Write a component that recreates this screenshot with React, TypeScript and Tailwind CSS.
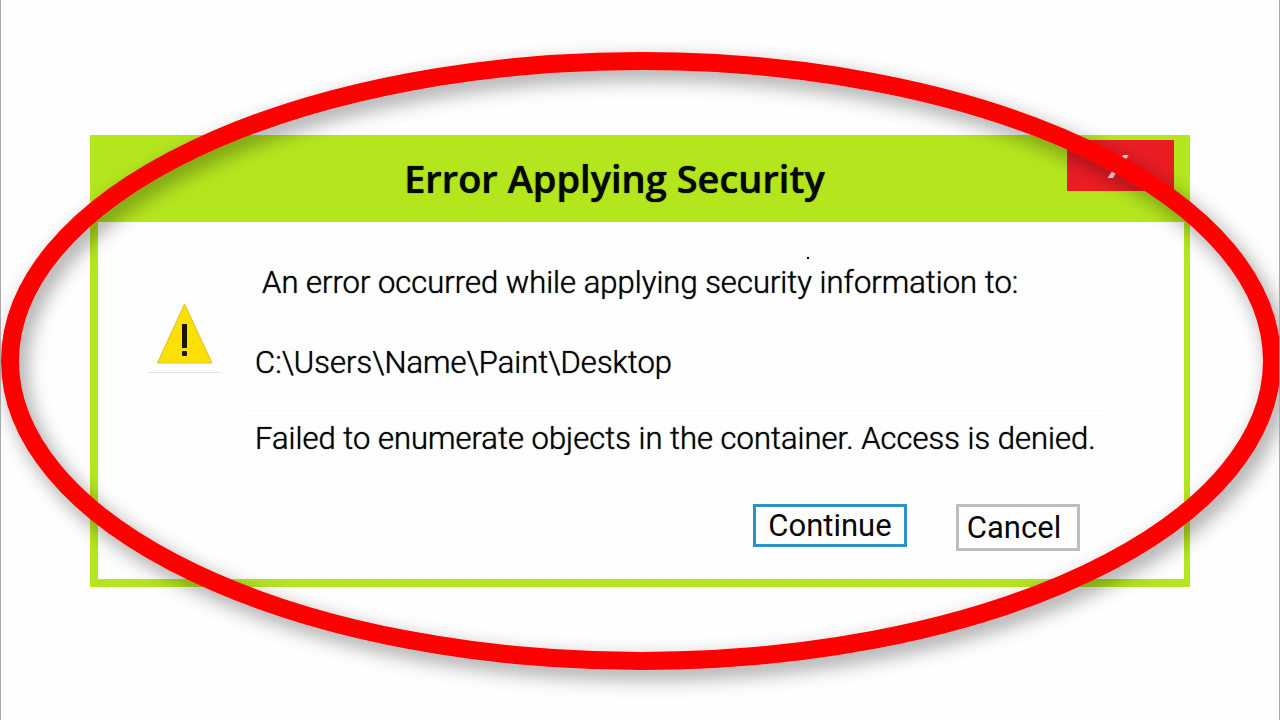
import React from 'react';

const WarningIcon: React.FC = () => (
  <svg width="56" height="62" viewBox="0 0 56 62" aria-hidden="true">
    <path d="M27.5 2 L55 61 H0.5 Z" fill="#fbe003" stroke="#e0bd2a" strokeWidth="1" />
    <rect x="25" y="22" width="5" height="24" fill="#1a1700" />
    <rect x="25" y="49" width="5" height="5" rx="1" fill="#1a1700" />
  </svg>
);

// Hand-marked red ring that sits on top of the whole page
const Highlight: React.FC = () => (
  <svg
    className="pointer-events-none absolute inset-0 h-full w-full"
    viewBox="0 0 1278 720"
    preserveAspectRatio="none"
    aria-hidden="true"
  >
    <defs>
      <filter id="ring-shadow" x="-10%" y="-10%" width="120%" height="120%">
        <feDropShadow dx="6" dy="8" stdDeviation="10" floodColor="#000" floodOpacity="0.38" />
      </filter>
    </defs>
    <ellipse
      cx="640"
      cy="361"
      rx="631"
      ry="300"
      fill="none"
      stroke="#fe0000"
      strokeWidth="18"
      filter="url(#ring-shadow)"
    />
  </svg>
);

const ErrorDialog: React.FC = () => {
  return (
    <section
      role="alertdialog"
      aria-labelledby="dialog-title"
      className="border-b-8 border-l-8 border-r-6 border-[#b4e61e] bg-[#fefefe]"
    >
      <header className="flex h-[87px] items-start bg-[#b4e61e] pt-[5px] pr-[10px]">
        <h1
          id="dialog-title"
          className="flex-1 pt-[10px] pl-16 text-center font-['Open_Sans',sans-serif] text-[38px] leading-[56px] font-semibold text-[#050800] [text-shadow:0_0_1px_#050800]"
        >
          Error Applying Security
        </h1>
        <button
          type="button"
          aria-label="Close"
          className="h-[51px] w-[107px] bg-[#ec1c24] pr-1 font-['Open_Sans',sans-serif] text-[32px] font-bold text-[#ffe3e8]"
        >
          X
        </button>
      </header>

      <div className="flex gap-[22px] pt-10 pr-[80px] pb-7 pl-[50px]">
        <div className="mt-10 flex h-[71px] w-[73px] shrink-0 justify-center border-b border-[#e4e4e4]">
          <WarningIcon />
        </div>

        <div className="flex-1 text-[31px] leading-[42px] text-[#080808]">
          <div className="pl-3 font-light [text-shadow:0_0_1px_#080808]">
            <p className="relative pl-[7px]">
              An error occurred while applying security information to:
              <span className="absolute -top-[5px] left-[552px] h-[2px] w-[2px] bg-black" />
            </p>
            <p className="mt-[38px]">C:\Users\Name\Paint\Desktop</p>
          </div>
          <p className="mt-[26px] border-t border-[#f8f8f8] pt-[7px] pl-3 font-light [text-shadow:0_0_1px_#080808]">
            Failed to enumerate objects in the container. Access is denied.
          </p>
          <div className="mt-11 flex items-start justify-end gap-[49px] pr-6">
            <button type="button" className="h-[43px] w-[154px] border-3 border-[#2a93c4] leading-9">
              Continue
            </button>
            <button type="button" className="h-[47px] w-[124px] border-3 border-[#bdbdbd] pr-2 leading-[38px]">
              Cancel
            </button>
          </div>
        </div>
      </div>
    </section>
  );
};

const App: React.FC = () => {
  return (
    <main className="relative min-h-screen border-x border-[#a9a9a9] bg-[#fefefe] px-[89px] pt-[135px] font-[Roboto,sans-serif]">
      <ErrorDialog />
      <Highlight />
    </main>
  );
};

export default App;
